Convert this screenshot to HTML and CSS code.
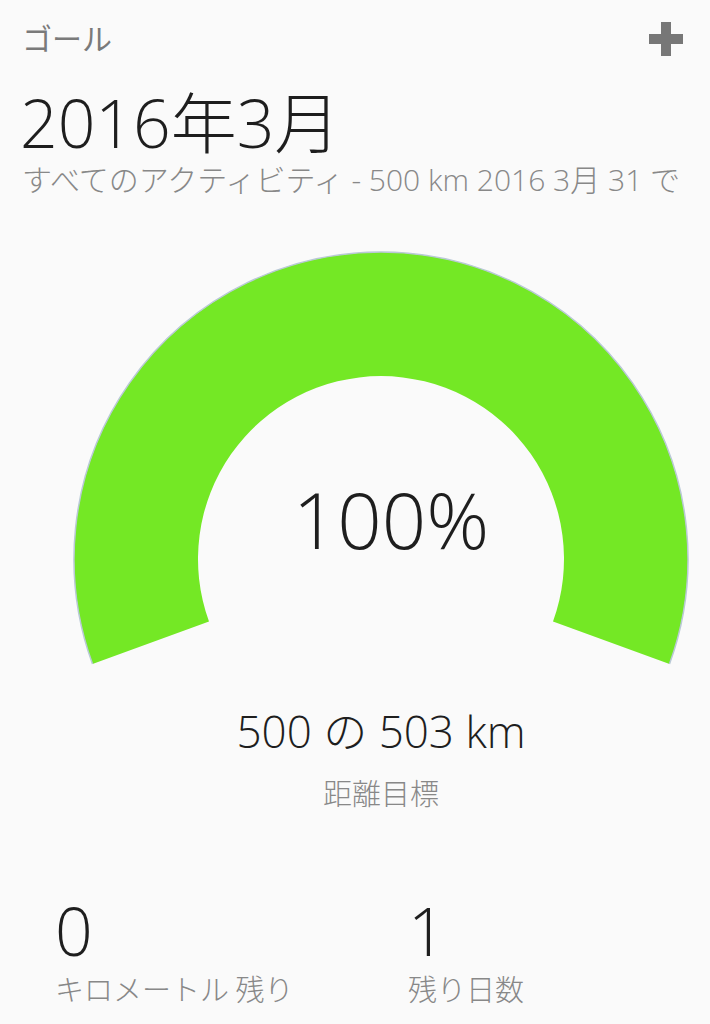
FILE: index.html
```html
<!DOCTYPE html>
<html lang="ja">
<head>
    <meta charset="UTF-8">
    <meta name="viewport" content="width=device-width, initial-scale=1.0">
    <title>ゴール</title>
    <link rel="stylesheet" href="styles.css">
</head>
<body>
    <div class="topbar">
        <span class="topbar-title">ゴール</span>
        <svg class="add-icon" width="34" height="34" viewBox="0 0 34 34">
            <rect x="12" y="0" width="10" height="34" fill="#777"/>
            <rect x="0" y="12" width="34" height="10" fill="#777"/>
        </svg>
    </div>

    <h1 class="month">2016年3月</h1>
    <div class="subtitle">すべてのアクティビティ - 500 km 2016 3月 31 で</div>

    <div class="gauge">
        <svg class="gauge-arc" width="710" height="440" viewBox="0 0 710 440">
            <path d="M92.5 422 A307 307 0 1 1 669.5 422 L553 379.6 A183 183 0 1 0 209 379.6 Z" fill="#74e825"/>
            <path d="M92.5 422 A307 307 0 1 1 669.5 422" fill="none" stroke="#b9c9d6" stroke-width="1.5"/>
        </svg>
        <div class="gauge-value">100%</div>
    </div>

    <div class="summary">
        <div class="summary-value">500 の 503 km</div>
        <div class="summary-label">距離目標</div>
    </div>

    <div class="stats">
        <div class="stat">
            <div class="stat-value">0</div>
            <div class="stat-label">キロメートル 残り</div>
        </div>
        <div class="stat">
            <div class="stat-value">1</div>
            <div class="stat-label">残り日数</div>
        </div>
    </div>
</body>
</html>
```

FILE: styles.css
```css
* {
    margin: 0;
    padding: 0;
    box-sizing: border-box;
}

body {
    background: #fafafa;
    font-family: 'Open Sans', 'Noto Sans CJK JP', sans-serif;
    font-weight: 300;
    color: #222;
    overflow: hidden;
}

.topbar {
    display: flex;
    justify-content: space-between;
    align-items: center;
    padding: 22px 27px 0 22px;
    height: 56px;
}

.topbar-title {
    font-size: 30px;
    line-height: 34px;
    color: #7a7a7a;
    font-weight: 400;
}

.add-icon {
    display: block;
}

.month {
    margin-top: 26px;
    padding-left: 20px;
    font-size: 66px;
    line-height: 80px;
    font-weight: 300;
    color: #1e1e1e;
}

.subtitle {
    padding-left: 22px;
    font-size: 30px;
    line-height: 36px;
    color: #888;
    white-space: nowrap;
}

.gauge {
    position: relative;
    margin-top: 44px;
    height: 440px;
}

.gauge-arc {
    display: block;
}

.gauge-value {
    position: absolute;
    left: 72px;
    right: 0;
    top: 237px;
    text-align: center;
    font-size: 78px;
    line-height: 80px;
    color: #1e1e1e;
}

.summary {
    padding-left: 52px;
    text-align: center;
    margin-top: 22px;
}

.summary-value {
    font-size: 44px;
    line-height: 54px;
    color: #1e1e1e;
}

.summary-label {
    margin-top: 18px;
    font-size: 29px;
    line-height: 36px;
    color: #888;
}

.stats {
    display: grid;
    grid-template-columns: 353px 1fr;
    padding-left: 55px;
    margin-top: 83px;
}

.stat-value {
    font-size: 66px;
    line-height: 70px;
    color: #1e1e1e;
}

.stat-label {
    margin-top: 5px;
    font-family: 'Noto Sans CJK JP', sans-serif;
    font-size: 29px;
    line-height: 36px;
    color: #888;
}
```
